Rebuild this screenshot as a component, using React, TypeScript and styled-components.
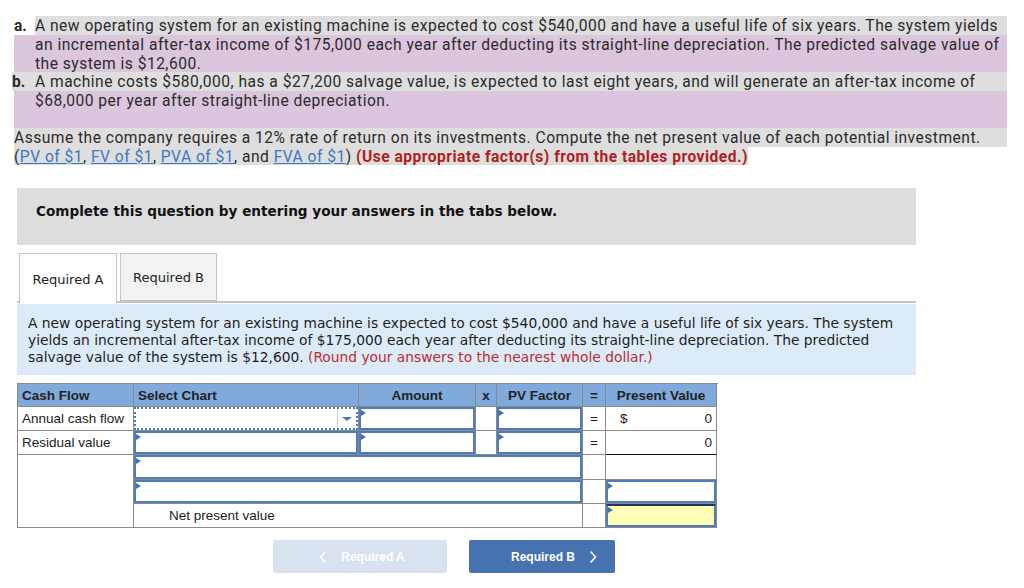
import React from "react";
import styled, { createGlobalStyle } from "styled-components";

const Global = createGlobalStyle`
  html, body { margin: 0; padding: 0; background: #fff; }
  body { font-family: "Roboto", "Liberation Sans", sans-serif; color: #333; }
`;

const Page = styled.div`
  width: 1024px;
  height: 588px;
  overflow: hidden;
  display: flex;
  flex-direction: column;
`;

const Problem = styled.div`
  padding-top: 16px;
  display: flex;
  flex-direction: column;
  font-family: "Roboto", "Liberation Sans", sans-serif;
  font-size: 15.6px;
  letter-spacing: 0.48px;
  line-height: 17px;
  color: #2b2b2b;
`;

const Line = styled.div<{ $bg: string; $h: number; $ml?: number; $fit?: boolean }>`
  display: flex;
  align-items: center;
  height: ${(p) => p.$h}px;
  margin-left: ${(p) => p.$ml ?? 14}px;
  width: ${(p) => (p.$fit ? "fit-content" : `${1007 - (p.$ml ?? 14)}px`)};
  background: ${(p) => p.$bg};
  white-space: nowrap;
  overflow: hidden;
`;

const Text = styled.span`
  display: block;
  height: 17px;
  padding-top: 2px;
  line-height: 17px;
`;

const Marker = styled.span<{ $w: number; $bg?: string }>`
  width: ${(p) => p.$w}px;
  align-self: stretch;
  display: flex;
  align-items: center;
  padding-top: 2px;
  box-sizing: border-box;
  font-weight: 700;
  letter-spacing: 0;
  background: ${(p) => p.$bg ?? "transparent"};
`;

const Link = styled.a`
  color: #3b78c0;
  text-decoration: underline;
`;

const Strong = styled.span`
  color: #b01f1f;
  font-weight: 700;
`;

const Banner = styled.div`
  margin: 23px 0 0 17px;
  width: 899px;
  height: 57px;
  box-sizing: border-box;
  padding: 15px 0 0 19px;
  background: #dddddd;
  font-family: "DejaVu Sans", Verdana, sans-serif;
  font-size: 13.6px;
  font-weight: 700;
  color: #111;
  line-height: 17px;
  white-space: nowrap;
`;

const TabBar = styled.div`
  margin: 8px 0 0 17px;
  width: 897px;
  height: 48px;
  padding-left: 2px;
  display: flex;
  gap: 3px;
  border-bottom: 2px solid #c4c4c4;
`;

const Tab = styled.div<{ $active?: boolean; $w: number }>`
  width: ${(p) => p.$w}px;
  height: ${(p) => (p.$active ? 50 : 48)}px;
  box-sizing: border-box;
  border: 1px solid #c4c4c4;
  border-bottom: ${(p) => (p.$active ? "none" : "1px solid #c4c4c4")};
  background: ${(p) => (p.$active ? "#fff" : "#f2f2f2")};
  display: flex;
  align-items: center;
  justify-content: center;
  padding-top: ${(p) => (p.$active ? 1 : 0)}px;
  font-family: "DejaVu Sans", Verdana, sans-serif;
  font-size: 13px;
  color: #222;
  position: relative;
  z-index: 1;
`;

const Info = styled.div`
  margin: 1px 0 0 17px;
  width: 899px;
  box-sizing: border-box;
  padding: 11px 11px 9px;
  background: #ddeaf7;
  font-family: "DejaVu Sans", Verdana, sans-serif;
  font-size: 13.8px;
  line-height: 17px;
  color: #1e1e1e;
  white-space: nowrap;
`;

const Note = styled.span`
  color: #b8302c;
`;

const Grid = styled.div`
  display: grid;
  grid-template-columns: 116px 225px 117px 21px 86px 23px 111px;
  grid-template-rows: 23px 24px 24px 25px 24px 24px;
  margin: 8px 0 0 17px;
  width: 700px;
  border-top: 1px solid #8a8a8a;
  border-left: 1px solid #8a8a8a;
  font-family: "Liberation Sans", Arial, sans-serif;
  font-size: 13.5px;
  color: #222;
`;

const Cell = styled.div<{
  $col?: string;
  $row?: string;
  $head?: boolean;
  $justify?: string;
  $pl?: number;
  $pr?: number;
  $bb?: string;
  $fill?: boolean;
}>`
  grid-column: ${(p) => p.$col ?? "auto"};
  grid-row: ${(p) => p.$row ?? "auto"};
  border-right: 1px solid #8a8a8a;
  border-bottom: 1px solid ${(p) => p.$bb ?? "#8a8a8a"};
  background: ${(p) => (p.$head ? "#80aadc" : "#fff")};
  font-weight: ${(p) => (p.$head ? 700 : 400)};
  display: flex;
  align-items: ${(p) => (p.$fill ? "stretch" : "center")};
  justify-content: ${(p) => p.$justify ?? "flex-start"};
  padding: ${(p) => (p.$fill ? "0" : `0 ${p.$pr ?? 4}px 0 ${p.$pl ?? 4}px`)};
  box-sizing: border-box;
  min-width: 0;
  white-space: nowrap;
`;

const InputBox = styled.div<{ $bg?: string; $top?: string }>`
  flex: 1;
  position: relative;
  border: 2px solid #4f7bb8;
  border-top-color: ${(p) => p.$top ?? "#4f7bb8"};
  background: ${(p) => p.$bg ?? "#fff"};
  &::before {
    content: "";
    position: absolute;
    left: 0;
    top: 1px;
    border-left: 5px solid #3f72b6;
    border-top: 3px solid transparent;
    border-bottom: 3px solid transparent;
  }
`;

const SelectBox = styled.div`
  flex: 1;
  display: flex;
  justify-content: flex-end;
  border: 2px dotted #4a7ab8;
  background: #fff;
`;

const SelectArrow = styled.div`
  width: 18px;
  border-left: 1px solid #cfcfcf;
  display: flex;
  align-items: center;
  justify-content: center;
  &::after {
    content: "";
    border-top: 4px solid #4a78b6;
    border-left: 5px solid transparent;
    border-right: 5px solid transparent;
  }
`;

const Dollar = styled.span`
  flex: 1;
  padding-left: 10px;
`;

const NavRow = styled.div`
  display: flex;
  gap: 22px;
  margin: 12px 0 0 273px;
`;

const NavButton = styled.div<{ $w: number; $primary?: boolean; $pl: number }>`
  width: ${(p) => p.$w}px;
  height: 33px;
  box-sizing: border-box;
  padding-left: ${(p) => p.$pl}px;
  border-radius: 2px;
  background: ${(p) => (p.$primary ? "#4673b0" : "#d9e3f0")};
  color: #fff;
  font-family: "Liberation Sans", Arial, sans-serif;
  font-size: 12px;
  font-weight: 700;
  display: flex;
  align-items: center;
  justify-content: center;
  gap: 14px;
`;

const Chevron = ({ dir }: { dir: "left" | "right" }) => (
  <svg width="8" height="12" viewBox="0 0 8 12" fill="none">
    <polyline
      points={dir === "left" ? "6,1 1.5,6 6,11" : "2,1 6.5,6 2,11"}
      stroke="#fff"
      strokeWidth="1.6"
      strokeLinecap="round"
      strokeLinejoin="round"
    />
  </svg>
);

export default function App() {
  const purple = "#dcc6dd";
  const gray = "#dedede";
  return (
    <Page>
      <Global />
      <Problem>
        <Line $bg={gray} $h={19}>
          <Marker $w={21} $bg="#fff">a.</Marker>
          <Text>
            A new operating system for an existing machine is expected to cost $540,000 and have a useful life of six years. The system yields
          </Text>
        </Line>
        <Line $bg={purple} $h={19}>
          <Marker $w={21} />
          <Text>
            an incremental after-tax income of $175,000 each year after deducting its straight-line depreciation. The predicted salvage value of
          </Text>
        </Line>
        <Line $bg={purple} $h={18}>
          <Marker $w={21} />
          <Text>the system is $12,600.</Text>
        </Line>
        <Line $bg={gray} $h={19} $ml={12}>
          <Marker $w={23}>b.</Marker>
          <Text>
            A machine costs $580,000, has a $27,200 salvage value, is expected to last eight years, and will generate an after-tax income of
          </Text>
        </Line>
        <Line $bg={purple} $h={19}>
          <Marker $w={21} />
          <Text>$68,000 per year after straight-line depreciation.</Text>
        </Line>
        <Line $bg={purple} $h={18} />
        <Line $bg={gray} $h={19}>
          <Text>
            Assume the company requires a 12% rate of return on its investments. Compute the net present value of each potential investment.
          </Text>
        </Line>
        <Line $bg={gray} $h={18} $fit>
          <Text>
            (<Link>PV of $1</Link>, <Link>FV of $1</Link>, <Link>PVA of $1</Link>, and <Link>FVA of $1</Link>){" "}
            <Strong>(Use appropriate factor(s) from the tables provided.)</Strong>
          </Text>
        </Line>
      </Problem>

      <Banner>Complete this question by entering your answers in the tabs below.</Banner>

      <TabBar>
        <Tab $active $w={98}>Required A</Tab>
        <Tab $w={97}>Required B</Tab>
      </TabBar>

      <Info>
        A new operating system for an existing machine is expected to cost $540,000 and have a useful life of six years. The system
        <br />
        yields an incremental after-tax income of $175,000 each year after deducting its straight-line depreciation. The predicted
        <br />
        salvage value of the system is $12,600. <Note>(Round your answers to the nearest whole dollar.)</Note>
      </Info>

      <Grid>
        <Cell $head>Cash Flow</Cell>
        <Cell $head>Select Chart</Cell>
        <Cell $head $justify="center">Amount</Cell>
        <Cell $head $justify="center">x</Cell>
        <Cell $head $justify="center">PV Factor</Cell>
        <Cell $head $justify="center">=</Cell>
        <Cell $head $justify="center">Present Value</Cell>

        <Cell>Annual cash flow</Cell>
        <Cell $fill>
          <SelectBox>
            <SelectArrow />
          </SelectBox>
        </Cell>
        <Cell $fill>
          <InputBox />
        </Cell>
        <Cell />
        <Cell $fill>
          <InputBox />
        </Cell>
        <Cell $justify="center">=</Cell>
        <Cell>
          <Dollar>$</Dollar>0
        </Cell>

        <Cell>Residual value</Cell>
        <Cell $fill>
          <InputBox />
        </Cell>
        <Cell $fill>
          <InputBox />
        </Cell>
        <Cell />
        <Cell $fill>
          <InputBox />
        </Cell>
        <Cell $justify="center">=</Cell>
        <Cell $justify="flex-end" $bb="#111">0</Cell>

        <Cell $col="1" $row="4 / span 3" />
        <Cell $col="2 / span 4" $row="4" $fill>
          <InputBox />
        </Cell>
        <Cell $col="6" $row="4" />
        <Cell $col="7" $row="4" />

        <Cell $col="2 / span 4" $row="5" $fill>
          <InputBox />
        </Cell>
        <Cell $col="6" $row="5" />
        <Cell $col="7" $row="5" $fill>
          <InputBox />
        </Cell>

        <Cell $col="2 / span 4" $row="6" $pl={35}>Net present value</Cell>
        <Cell $col="6" $row="6" />
        <Cell $col="7" $row="6" $fill>
          <InputBox $bg="#ffffb5" $top="#1d3558" />
        </Cell>
      </Grid>

      <NavRow>
        <NavButton $w={174} $pl={4}>
          <Chevron dir="left" />
          Required A
        </NavButton>
        <NavButton $w={146} $pl={24} $primary>
          Required B
          <Chevron dir="right" />
        </NavButton>
      </NavRow>
    </Page>
  );
}
